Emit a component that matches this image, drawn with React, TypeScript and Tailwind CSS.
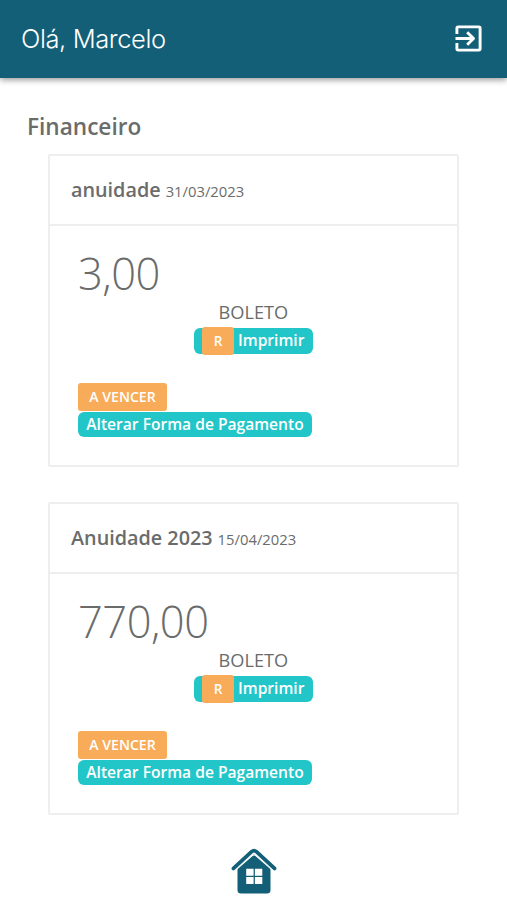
import React from "react";

interface Invoice {
  title: string;
  date: string;
  amount: string;
}

const invoices: Invoice[] = [
  { title: "anuidade", date: "31/03/2023", amount: "3,00" },
  { title: "Anuidade 2023", date: "15/04/2023", amount: "770,00" },
];

const ExitIcon = () => (
  <svg
    width="27"
    height="27"
    viewBox="0 0 27 27"
    fill="none"
    stroke="currentColor"
    strokeWidth="2.9"
    strokeLinejoin="round"
  >
    <path d="M1.9 9V3.2Q1.9 1.9 3.2 1.9H23.8Q25.1 1.9 25.1 3.2V23.8Q25.1 25.1 23.8 25.1H3.2Q1.9 25.1 1.9 23.8V18" />
    <path d="M0.5 13.5H18M12.2 7.2L18.5 13.5L12.2 19.8" />
  </svg>
);

const HomeIcon = () => (
  <svg width="46" height="46" viewBox="0 0 46 46" fill="none">
    <path
      d="M6.5 20L23 6L39.5 20V42Q39.5 45.5 36 45.5H10Q6.5 45.5 6.5 42Z"
      fill="#135f77"
    />
    <path
      d="M4 22.6L21.2 7.6Q23 6 24.8 7.6L42 22.6"
      stroke="#fff"
      strokeWidth="1.2"
    />
    <path
      d="M2.5 20.4L20.6 3.6Q23 1.6 25.4 3.6L43.5 20.4"
      stroke="#135f77"
      strokeWidth="3.8"
      strokeLinecap="round"
    />
    <path
      d="M15.2 20.7h7.4v7h-7.4zM23.9 20.7h7.4v7h-7.4zM15.2 28.9h7.4v7h-7.4zM23.9 28.9h7.4v7h-7.4z"
      fill="#fff"
    />
  </svg>
);

const InvoiceCard = ({ title, date, amount }: Invoice) => (
  <div className="h-[313px] rounded-[2px] border-2 border-[#eeeeee]">
    <div className="flex h-[70px] items-baseline gap-[5px] border-b-2 border-[#eeeeee] pl-[21px] pt-[20px] leading-7">
      <h3 className="text-[19.8px] font-semibold">{title}</h3>
      <span className="text-[14.8px]">{date}</span>
    </div>

    <div className="flex flex-col items-start pl-7">
      <p className="mt-[18px] h-[57px] text-[43.5px] leading-[59px] font-light tracking-[-0.5px]">
        {amount}
      </p>
      <div className="ml-[116px] flex flex-col items-start">
        <span className="ml-[24.5px] h-[27px] text-[18.2px] leading-[22px]">
          BOLETO
        </span>
        <button className="flex h-[26px] w-[119px] items-center rounded-[6px] bg-[#23c6c8] pl-2 text-[15.6px] font-semibold text-white">
          <span className="mr-1 flex h-7 w-8 shrink-0 items-center justify-center rounded-[3px] bg-[#f8ac59] text-[13.6px]">
            R
          </span>
          <span>Imprimir</span>
        </button>
      </div>
      <span className="mt-[29px] flex h-7 w-[89px] items-center justify-center rounded-[3px] bg-[#f8ac59] text-[14.1px] font-semibold text-white">
        A VENCER
      </span>
      <button className="mt-px flex h-[25px] w-[234px] items-center justify-center rounded-[6px] bg-[#23c6c8] text-[15.6px] font-semibold text-white">
        Alterar Forma de Pagamento
      </button>
    </div>
  </div>
);

const App = () => {
  return (
    <div className="flex h-[900px] w-[507px] flex-col overflow-hidden bg-white font-['Open_Sans',sans-serif] text-[#6a6c6c]">
      <header className="flex h-[78px] shrink-0 items-center justify-between bg-[#135f77] pl-[21px] pr-[25px] text-white shadow-[0_2px_6px_rgba(0,0,0,0.4)]">
        <span className="font-['Inter',sans-serif] text-[25.5px] font-light tracking-[-0.4px]">
          Olá, Marcelo
        </span>
        <button aria-label="Sair" className="-mt-0.5">
          <ExitIcon />
        </button>
      </header>

      <main>
        <h2 className="mt-[33px] pl-[27px] text-[22.6px] leading-8 font-semibold">
          Financeiro
        </h2>
        <div className="mt-[11px] ml-12 flex w-[411px] flex-col gap-[35px]">
          {invoices.map((invoice) => (
            <InvoiceCard key={invoice.title} {...invoice} />
          ))}
        </div>
      </main>

      <nav className="mt-[33px] flex justify-center">
        <HomeIcon />
      </nav>
    </div>
  );
};

export default App;
